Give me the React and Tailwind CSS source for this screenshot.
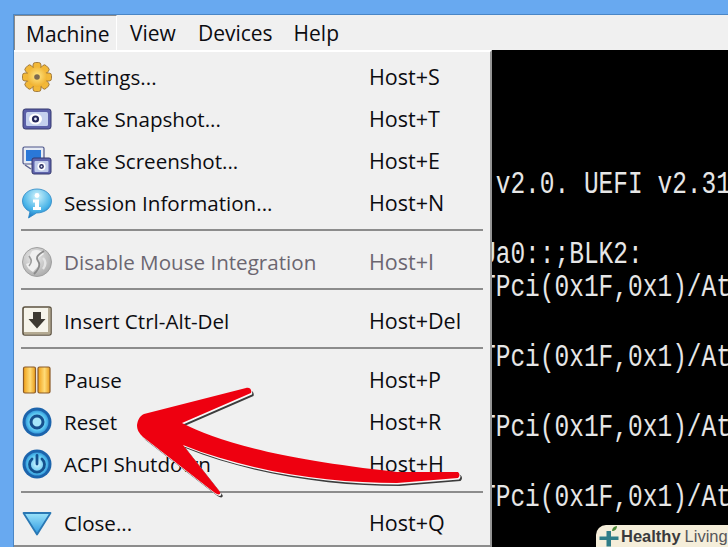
const SEGOE = "font-['Open_Sans','Noto_Sans',sans-serif]";

function Gear() {
  const teeth = [0, 45, 90, 135, 180, 225, 270, 315];
  return (
    <svg width="32" height="32" viewBox="0 0 32 32">
      <defs>
        <radialGradient id="gear" cx="50%" cy="45%" r="60%">
          <stop offset="0%" stopColor="#ffe888" />
          <stop offset="100%" stopColor="#eeaa24" />
        </radialGradient>
      </defs>
      {teeth.map((a) => (
        <rect key={a} x="12" y="1.5" width="8" height="8" rx="2.5" fill="#f2b838" stroke="#9c7438" strokeWidth="0.9" transform={`rotate(${a} 16 16)`} />
      ))}
      <circle cx="16" cy="16" r="10" fill="url(#gear)" />
      <circle cx="16" cy="16" r="2.8" fill="#7c6a50" />
    </svg>
  );
}

function Snapshot() {
  return (
    <svg width="32" height="32" viewBox="0 0 32 32">
      <rect x="2" y="6" width="28" height="20" rx="2.5" fill="#5a5fa8" stroke="#34386e" strokeWidth="1" />
      <rect x="5" y="9" width="22" height="14" rx="1.5" fill="#c4d0ee" />
      <ellipse cx="14.5" cy="16" rx="6.5" ry="5.5" fill="#fff" />
      <circle cx="14.5" cy="16" r="3.6" fill="#23265a" />
      <circle cx="14.5" cy="16" r="1.4" fill="#dfe6f8" />
    </svg>
  );
}

function Screenshot() {
  return (
    <svg width="32" height="32" viewBox="0 0 32 32">
      <rect x="2" y="2" width="21" height="17" rx="1.5" fill="#e6ebf4" stroke="#4c5488" strokeWidth="1.2" />
      <rect x="5" y="5" width="15" height="11" fill="#2a78d8" />
      <path d="M4 20 L10 24" stroke="#5c628e" strokeWidth="1.5" />
      <rect x="11" y="13" width="19" height="16" rx="2" fill="#5f64ac" stroke="#34386e" strokeWidth="1" />
      <rect x="13.5" y="16" width="14" height="11" rx="1" fill="#c0cbea" />
      <circle cx="20.5" cy="21.5" r="4" fill="#fff" />
      <circle cx="20.5" cy="21.5" r="2.4" fill="#2c2f62" />
      <circle cx="20.5" cy="21.5" r="0.9" fill="#dfe6f8" />
    </svg>
  );
}

function Info() {
  return (
    <svg width="32" height="32" viewBox="0 0 32 32">
      <defs>
        <radialGradient id="bubble" cx="50%" cy="25%" r="75%">
          <stop offset="0%" stopColor="#d0f4fc" />
          <stop offset="65%" stopColor="#4ab4e8" />
          <stop offset="100%" stopColor="#1c78c4" />
        </radialGradient>
      </defs>
      <path d="M16 2 C8 2 1.5 7 1.5 14 C1.5 19 5 23 9 24.5 L7.5 31 L15.5 26 C24 26 30.5 21 30.5 14 C30.5 7 24 2 16 2 Z" fill="url(#bubble)" stroke="#2a86c4" strokeWidth="0.8" />
      <circle cx="16" cy="8.5" r="2.4" fill="#fff" />
      <path d="M12 12.5 H18 V20 H20 V23 H12 V20 H14 V15.5 H12 Z" fill="#fff" />
    </svg>
  );
}

function MouseOff() {
  return (
    <svg width="32" height="32" viewBox="0 0 32 32">
      <defs>
        <radialGradient id="mouse" cx="40%" cy="35%" r="70%">
          <stop offset="0%" stopColor="#ececec" />
          <stop offset="100%" stopColor="#aaaaaa" />
        </radialGradient>
      </defs>
      <circle cx="16" cy="16" r="14.5" fill="url(#mouse)" stroke="#a0a0a0" strokeWidth="1" />
      <path d="M11 5 C15 3 21 4 23 8 L16 13 L19 18 L12 26 C8 24 6 21 5 18 L11 16 L8 11 Z" fill="#f0f0f0" />
      <path d="M23 5 C18 8 14 11 17 15 C20 19 17 24 13 28" fill="none" stroke="#8a8a8a" strokeWidth="1.8" />
      <path d="M8 10 C10 13 12 15 8 20" fill="none" stroke="#9c9c9c" strokeWidth="1.6" />
      <path d="M22 12 C25 15 25 19 22 23" fill="none" stroke="#e4e4e4" strokeWidth="2.4" />
    </svg>
  );
}

function InsertKey() {
  return (
    <svg width="32" height="32" viewBox="0 0 32 32">
      <rect x="2" y="2" width="28" height="28" rx="2" fill="#f6f4ea" stroke="#5c5240" strokeWidth="1.6" />
      <rect x="27" y="3" width="2.5" height="26" fill="#b4aa92" />
      <rect x="3" y="27" width="26" height="2.5" fill="#b4aa92" />
      <path d="M12 7 H20 V14 H24.5 L16 23.5 L7.5 14 H12 Z" fill="#3e3a32" />
    </svg>
  );
}

function Pause() {
  return (
    <svg width="32" height="32" viewBox="0 0 32 32">
      <defs>
        <linearGradient id="bar" x1="0" x2="1" y1="0" y2="0">
          <stop offset="0%" stopColor="#f0a018" />
          <stop offset="55%" stopColor="#ffdc78" />
          <stop offset="100%" stopColor="#e89a18" />
        </linearGradient>
      </defs>
      <rect x="2.5" y="3" width="12" height="26" rx="1.5" fill="url(#bar)" stroke="#8a5a28" strokeWidth="1.2" />
      <rect x="17" y="3" width="12" height="26" rx="1.5" fill="url(#bar)" stroke="#8a5a28" strokeWidth="1.2" />
    </svg>
  );
}

function RoundButton({ id, children }) {
  return (
    <svg width="32" height="32" viewBox="0 0 32 32">
      <defs>
        <radialGradient id={id} cx="50%" cy="50%" r="55%">
          <stop offset="0%" stopColor="#d8f6ff" />
          <stop offset="70%" stopColor="#56c4f0" />
          <stop offset="100%" stopColor="#2c8cd4" />
        </radialGradient>
      </defs>
      <circle cx="16" cy="16" r="14.5" fill="#1c64ac" />
      <circle cx="16" cy="16" r="11.5" fill={`url(#${id})`} />
      {children}
    </svg>
  );
}

function Reset() {
  return (
    <RoundButton id="reset">
      <circle cx="16" cy="16" r="6" fill="#a6e6fa" stroke="#16508e" strokeWidth="3" />
    </RoundButton>
  );
}

function Power() {
  return (
    <RoundButton id="power">
      <path d="M11 11 A7.5 7.5 0 1 0 21 11" fill="none" stroke="#14508e" strokeWidth="2.8" strokeLinecap="round" />
      <path d="M16 7.5 V16" stroke="#14508e" strokeWidth="2.8" strokeLinecap="round" />
    </RoundButton>
  );
}

function CloseIcon() {
  return (
    <svg width="32" height="32" viewBox="0 0 32 32">
      <defs>
        <linearGradient id="tri" x1="0" x2="0" y1="0" y2="1">
          <stop offset="0%" stopColor="#9ce4fa" />
          <stop offset="100%" stopColor="#2a96e0" />
        </linearGradient>
      </defs>
      <path d="M2.5 6 H29.5 L16 27.5 Z" fill="url(#tri)" stroke="#2a78b4" strokeWidth="1.8" strokeLinejoin="round" />
    </svg>
  );
}

function Row({ icon, label, keys, disabled }) {
  return (
    <div className={`flex h-[42px] items-center pl-[7px] ${disabled ? "text-[#6b6670]" : "text-[#0c0c10]"}`}>
      <div className="mr-[11px] h-[32px] w-[32px] shrink-0">{icon}</div>
      <div className="w-[305px] shrink-0 whitespace-nowrap text-[20.6px]">{label}</div>
      <div className="whitespace-nowrap text-[21.5px]">{keys}</div>
    </div>
  );
}

function Sep({ mt = "mt-[5px]", mb = "mb-[10px]" }) {
  return <div className={`mx-[7px] h-[2px] bg-[#8c8c8c] ${mt} ${mb}`} />;
}

const ARROW =
  "M137 425 C138 419 140 416 144 414 L246 388 C250 387 252 390 251 393 L182 423 C215 440 270 458 397 472 L458 472 C460 474 460 476 458 478 L397 483 C330 483 250 472 183 445 L220 492 C221 495 218 495 215 493 L143 437 C139 433 137 430 137 425 Z";

function Arrow() {
  return (
    <svg className="pointer-events-none absolute inset-0" width="728" height="547" viewBox="0 0 728 547">
      <path d={ARROW} fill="#3c3c3c" transform="translate(2.5 3)" />
      <path d={ARROW} fill="#f8f8f8" transform="translate(1 1.5)" />
      <path d={ARROW} fill="#ee0010" />
    </svg>
  );
}

function Badge() {
  return (
    <div className="absolute bottom-0 right-0 flex h-[22px] w-[132px] items-center rounded-tl-[10px] bg-[#f5eeda] pl-[3px] font-['Liberation_Sans',sans-serif] text-[16.5px] leading-none">
      <svg className="mr-[2px] shrink-0" width="20" height="21" viewBox="0 0 20 21">
        <path d="M7.5 5 H12 V10.5 H19.5 V14 H12 V20.5 H7.5 V14 H0.5 V10.5 H7.5 Z" fill="#2f7d88" />
        <path d="M13 5 C13 2 15 0.5 18 0 C18 3 16 5 13 5 Z" fill="#4f8a3a" />
      </svg>
      <span className="font-bold text-[#3a3a3c]">Healthy</span>
      <span className="ml-[4px] text-[#57575a]">Living</span>
    </div>
  );
}

export default function App() {
  const lines = [
    " v2.0. UEFI v2.31",
    "",
    "Ua0::;BLK2:",
    "TPci(0x1F,0x1)/At",
    "",
    "TPci(0x1F,0x1)/At",
    "",
    "TPci(0x1F,0x1)/At",
    "",
    "TPci(0x1F,0x1)/At",
  ];

  return (
    <div className={`relative h-[547px] w-[728px] overflow-hidden bg-[#68a9f0] pl-[13px] pt-[14px] ${SEGOE}`}>
      <div className="flex h-[533px] flex-col border-l border-t border-[#4a86c6] bg-[#f0f0f0]">
        <nav className="flex h-[35px] shrink-0 items-center text-[21px] text-[#0c0c10]">
          <div className="flex h-[35px] w-[103px] items-center border-l border-r border-t border-[#8a8a8a] border-r-white pl-[11px] pt-[3px]">Machine</div>
          <div className="ml-[13px] pt-[2px]">View</div>
          <div className="ml-[22px] pt-[2px]">Devices</div>
          <div className="ml-[21px] pt-[2px]">Help</div>
        </nav>
        <div className="flex min-h-0 flex-1">
          <div className="w-[478px] shrink-0 border-b-2 border-r-2 border-t-2 border-b-[#8c8c8c] border-r-[#949494] border-t-white pt-[4px]">
            <Row icon={<Gear />} label="Settings..." keys="Host+S" />
            <Row icon={<Snapshot />} label="Take Snapshot..." keys="Host+T" />
            <Row icon={<Screenshot />} label="Take Screenshot..." keys="Host+E" />
            <Row icon={<Info />} label="Session Information..." keys="Host+N" />
            <Sep />
            <Row icon={<MouseOff />} label="Disable Mouse Integration" keys="Host+I" disabled />
            <Sep />
            <Row icon={<InsertKey />} label="Insert Ctrl-Alt-Del" keys="Host+Del" />
            <Sep />
            <Row icon={<Pause />} label="Pause" keys="Host+P" />
            <Row icon={<Reset />} label="Reset" keys="Host+R" />
            <Row icon={<Power />} label="ACPI Shutdown" keys="Host+H" />
            <Sep mt="mt-[6px]" mb="mb-[9px]" />
            <Row icon={<CloseIcon />} label="Close..." keys="Host+Q" />
          </div>
          <div className="min-w-0 flex-1 overflow-hidden bg-black pt-[117px] font-['Liberation_Mono',monospace] text-[24.5px] leading-[35px] text-[#e6e6e6]">
            {lines.map((line, i) => (
              <div key={i} className={`-ml-[11px] h-[35px] scale-y-[1.25] whitespace-pre ${i === 2 ? "-mb-[2px]" : ""}`}>{line}</div>
            ))}
          </div>
        </div>
      </div>
      <Arrow />
      <Badge />
    </div>
  );
}
